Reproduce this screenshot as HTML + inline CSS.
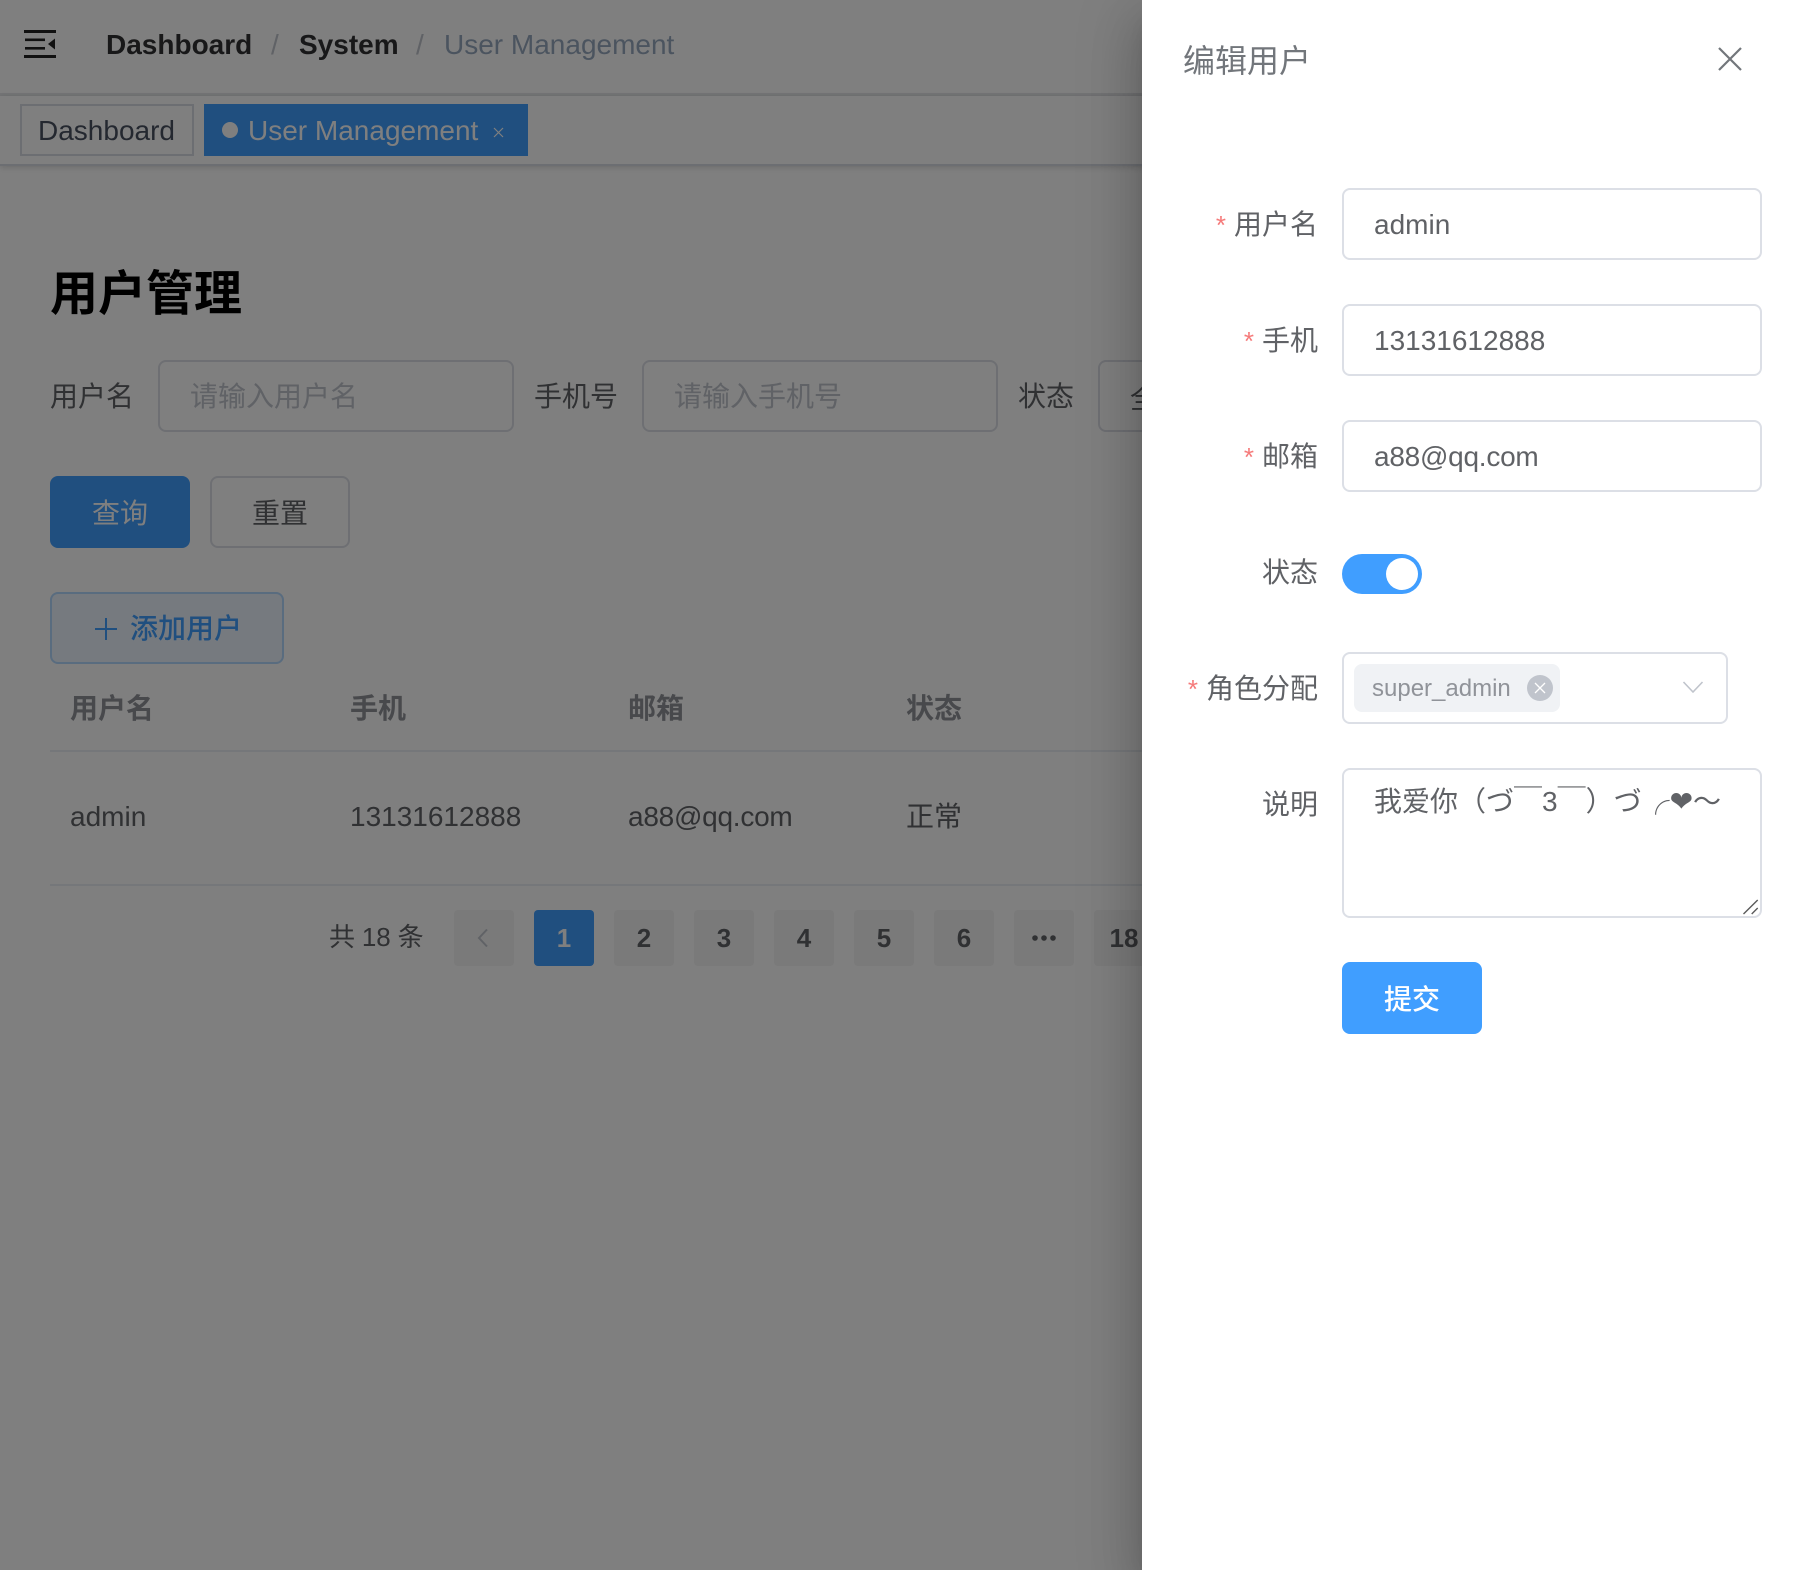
<!DOCTYPE html>
<html lang="zh-CN">
<head>
<meta charset="utf-8">
<title>用户管理</title>
<style>
*{box-sizing:border-box}
html,body{margin:0;padding:0;width:1800px;height:1570px;overflow:hidden;background:#fff}
body{font-family:"Liberation Sans","Noto Sans CJK SC",sans-serif;font-size:28px;color:#606266;position:relative}
.t{position:absolute;white-space:nowrap;line-height:40px;height:40px}
.box{position:absolute}
input,textarea{font-family:inherit;font-size:28px;color:#606266;outline:none;background:#fff;border:2px solid #dcdfe6;border-radius:8px;position:absolute;margin:0}
input{height:72px;padding:2px 30px 0}
input::placeholder{color:#c0c4cc;opacity:1}
textarea{line-height:42px;padding:11px 30px 9px;resize:none}
.btn{position:absolute;height:72px;border-radius:8px;text-align:center;line-height:72px;border:2px solid #dcdfe6;background:#fff;color:#606266}
.pg{position:absolute;top:910px;width:60px;height:56px;background:#f4f4f5;border-radius:4px;text-align:center;line-height:56px;font-size:26px;font-weight:bold;color:#606266;overflow:hidden}
.th{font-weight:bold;color:#909399;top:689px}
.td{color:#606266;top:797px}
.lb{right:482px}
.req{color:#f56c6c;margin-right:8px;font-size:26px;opacity:.9}
.tight{letter-spacing:-.25px}
#overlay{position:absolute;left:0;top:0;width:1800px;height:1570px;background:rgba(0,0,0,.5)}
#drawer{position:absolute;left:1142px;top:0;width:658px;height:1570px;background:#fff;box-shadow:0 16px 20px -10px rgba(0,0,0,.2),0 32px 48px 4px rgba(0,0,0,.14),0 12px 60px 10px rgba(0,0,0,.12)}
#right{position:absolute;left:0;top:0;width:1800px;height:1570px}
</style>
</head>
<body>

<!-- navbar -->
<div class="box" style="left:0;top:0;width:1800px;height:96px;background:#fff;border-bottom:3px solid #e8e9ec"></div>
<svg class="box" style="left:24px;top:30px" width="32" height="28" viewBox="0 0 32 28">
<rect x="0" y="0" width="32" height="3" fill="#222"/>
<rect x="1" y="8.5" width="20" height="2.6" fill="#222"/>
<rect x="1" y="17" width="20" height="2.6" fill="#222"/>
<rect x="0" y="25" width="32" height="3" fill="#222"/>
<path d="M24 14 L31 8.5 V19.5 Z" fill="#222"/>
</svg>
<div class="t" style="left:106px;top:25px;font-weight:bold;color:#303133">Dashboard</div>
<div class="t" style="left:271px;top:25px;color:#c0c4cc">/</div>
<div class="t" style="left:299px;top:25px;font-weight:bold;color:#303133">System</div>
<div class="t" style="left:416px;top:25px;color:#c0c4cc">/</div>
<div class="t" style="left:444px;top:25px;color:#97a8be">User Management</div>

<!-- tags -->
<div class="box" style="left:0;top:96px;width:1800px;height:70px;background:#fff;border-bottom:2px solid #d8dce5;box-shadow:0 2px 6px rgba(0,0,0,.12),0 0 6px rgba(0,0,0,.04)"></div>
<div class="box" style="left:20px;top:104px;width:174px;height:52px;border:2px solid #d8dce5;background:#fff;color:#495060;line-height:50px;padding-left:16px">Dashboard</div>
<div class="box" style="left:204px;top:104px;width:324px;height:52px;background:#409eff;color:#fff;line-height:54px">
<span class="box" style="left:18px;top:18px;width:16px;height:16px;border-radius:50%;background:#fff"></span>
<span class="box" style="left:44px;top:0;white-space:nowrap">User Management</span>
<svg class="box" style="left:289px;top:23px" width="11" height="11" viewBox="0 0 11 11"><path d="M1 1 L10 10 M10 1 L1 10" stroke="#fff" stroke-width="1.2" fill="none"/></svg>
</div>

<!-- page -->
<div class="t" style="left:50px;top:262px;height:66px;line-height:66px;font-size:48px;font-weight:bold;color:#000">用户管理</div>

<div class="t" style="left:50px;top:377px">用户名</div>
<input style="left:158px;top:360px;width:356px" placeholder="请输入用户名">
<div class="t" style="left:534px;top:377px">手机号</div>
<input style="left:642px;top:360px;width:356px" placeholder="请输入手机号">
<div class="t" style="left:1018px;top:377px">状态</div>
<input style="left:1098px;top:360px;width:240px" value="全部">

<div class="btn" style="left:50px;top:476px;width:140px;background:#409eff;border-color:#409eff;color:#fff">查询</div>
<div class="btn" style="left:210px;top:476px;width:140px">重置</div>
<div class="btn" style="left:50px;top:592px;width:234px;background:#ecf5ff;border-color:#b3d8ff;color:#409eff;font-weight:500"></div>
<svg class="box" style="left:94px;top:617px" width="24" height="24" viewBox="0 0 24 24"><path d="M12 1 V23 M1 12 H23" stroke="#409eff" stroke-width="2" fill="none"/></svg>
<div class="t" style="left:130px;top:609px;color:#409eff;font-weight:500">添加用户</div>

<div class="t th" style="left:70px">用户名</div>
<div class="t th" style="left:350px">手机</div>
<div class="t th" style="left:628px">邮箱</div>
<div class="t th" style="left:906px">状态</div>
<div class="box" style="left:50px;top:750px;width:1100px;height:2px;background:#ebeef5"></div>
<div class="t td" style="left:70px">admin</div>
<div class="t td" style="left:350px">13131612888</div>
<div class="t td tight" style="left:628px">a88@qq.com</div>
<div class="t td" style="left:906px">正常</div>
<div class="box" style="left:50px;top:884px;width:1100px;height:2px;background:#ebeef5"></div>

<div class="t" style="left:329px;top:917px;font-size:26px;letter-spacing:-.15px">共 18 条</div>
<div class="pg" style="left:454px"><svg style="position:absolute;left:22px;top:18px" width="14" height="20" viewBox="0 0 14 20"><path d="M11 1.5 L3 10 L11 18.5" stroke="#c0c4cc" stroke-width="2" fill="none"/></svg></div>
<div class="pg" style="left:534px;background:#409eff;color:#fff">1</div>
<div class="pg" style="left:614px">2</div>
<div class="pg" style="left:694px">3</div>
<div class="pg" style="left:774px">4</div>
<div class="pg" style="left:854px">5</div>
<div class="pg" style="left:934px">6</div>
<div class="pg" style="left:1014px"><svg style="position:absolute;left:17px;top:25px" width="26" height="6" viewBox="0 0 26 6"><circle cx="4" cy="3" r="2.8" fill="#606266"/><circle cx="13" cy="3" r="2.8" fill="#606266"/><circle cx="22" cy="3" r="2.8" fill="#606266"/></svg></div>
<div class="pg" style="left:1094px">18</div>

<div id="overlay"></div>

<!-- drawer -->
<div id="drawer"></div>
<div id="right">
<div class="t" style="left:1183px;top:39px;height:44px;line-height:44px;font-size:32px;color:#72767b">编辑用户</div>
<svg class="box" style="left:1718px;top:47px" width="24" height="24" viewBox="0 0 24 24"><path d="M1 1 L23 23 M23 1 L1 23" stroke="#72767b" stroke-width="2.2" fill="none"/></svg>

<div class="t lb" style="top:205px"><span class="req">*</span>用户名</div>
<input style="left:1342px;top:188px;width:420px" value="admin">

<div class="t lb" style="top:321px"><span class="req">*</span>手机</div>
<input style="left:1342px;top:304px;width:420px" value="13131612888">

<div class="t lb" style="top:437px"><span class="req">*</span>邮箱</div>
<input class="tight" style="left:1342px;top:420px;width:420px" value="a88@qq.com">

<div class="t lb" style="top:553px">状态</div>
<div class="box" style="left:1342px;top:554px;width:80px;height:40px;border-radius:20px;background:#409eff">
<span class="box" style="left:44px;top:4px;width:32px;height:32px;border-radius:50%;background:#fff"></span>
</div>

<div class="t lb" style="top:669px"><span class="req">*</span>角色分配</div>
<div class="box" style="left:1342px;top:652px;width:386px;height:72px;border:2px solid #dcdfe6;border-radius:8px;background:#fff"></div>
<div class="box" style="left:1354px;top:664px;width:206px;height:48px;border-radius:8px;background:#f0f2f5"></div>
<div class="t" style="left:1372px;top:669px;font-size:24px;color:#909399">super_admin</div>
<svg class="box" style="left:1527px;top:675px" width="26" height="26" viewBox="0 0 26 26"><circle cx="13" cy="13" r="13" fill="#c0c4cc"/><path d="M8 8 L18 18 M18 8 L8 18" stroke="#fff" stroke-width="1.3" fill="none"/></svg>
<svg class="box" style="left:1682px;top:680px" width="22" height="14" viewBox="0 0 22 14"><path d="M1.5 2 L11 12 L20.5 2" stroke="#c0c4cc" stroke-width="1.6" fill="none"/></svg>

<div class="t lb" style="top:785px">说明</div>
<textarea style="left:1342px;top:768px;width:420px;height:150px" spellcheck="false">我爱你（づ￣3￣）づ╭❤～</textarea>
<svg class="box" style="left:1742px;top:899px" width="17" height="16" viewBox="0 0 17 16"><path d="M1.5 15 L15.7 1 M9.7 15 L15.7 9" stroke="#5a5a5a" stroke-width="1.4" fill="none"/></svg>

<div class="btn" style="left:1342px;top:962px;width:140px;background:#409eff;border-color:#409eff;color:#fff;font-weight:500">提交</div>
</div>

</body>
</html>
